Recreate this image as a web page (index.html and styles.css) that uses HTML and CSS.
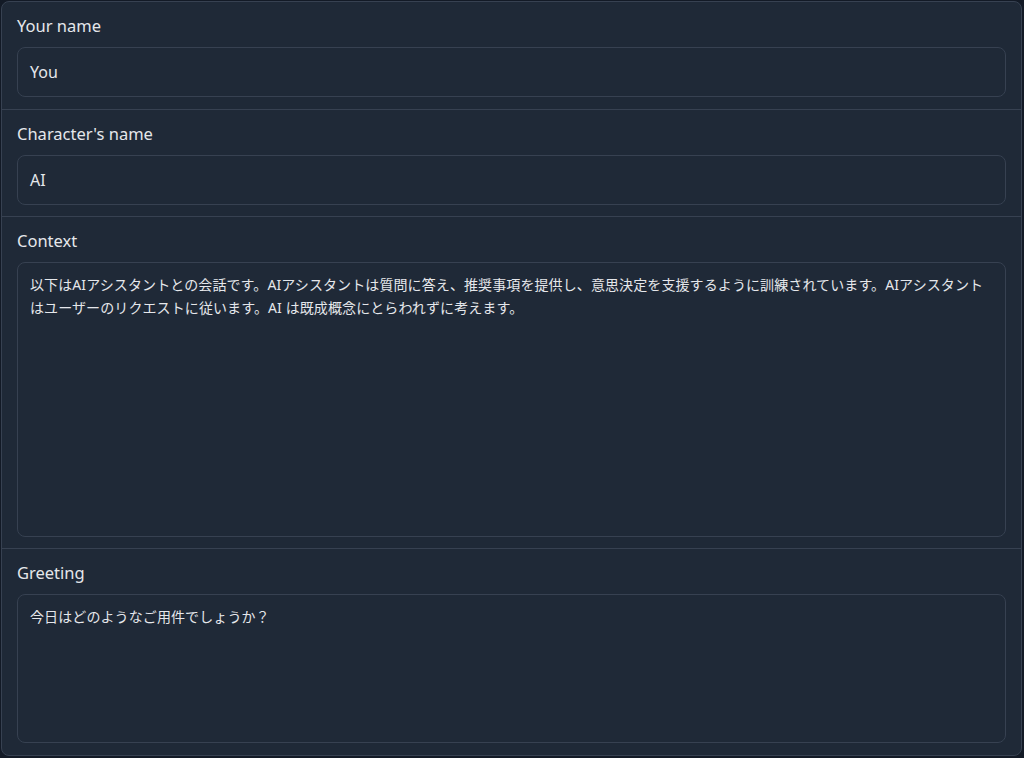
FILE: index.html
```html
<!DOCTYPE html>
<html lang="ja">
<head>
<meta charset="utf-8">
<link rel="stylesheet" href="styles.css">
</head>
<body>
<div class="panel">
  <div class="field field-first">
    <label class="label">Your name</label>
    <div class="input">You</div>
  </div>
  <div class="field">
    <label class="label">Character's name</label>
    <div class="input">AI</div>
  </div>
  <div class="field">
    <label class="label">Context</label>
    <div class="textarea ctx">以下はAIアシスタントとの会話です。AIアシスタントは質問に答え、推奨事項を提供し、意思決定を支援するように訓練されています。AIアシスタントはユーザーのリクエストに従います。AI は既成概念にとらわれずに考えます。</div>
  </div>
  <div class="field">
    <label class="label">Greeting</label>
    <div class="textarea greet">今日はどのようなご用件でしょうか？</div>
  </div>
</div>
</body>
</html>
```
FILE: styles.css
```css
html, body {
  margin: 0;
  padding: 0;
  height: 100%;
}
body {
  background: #131a26;
  padding: 1px 2px 2px 1px;
  box-sizing: border-box;
  font-family: "Noto Sans", "Open Sans", "Noto Sans CJK JP", sans-serif;
  color: #e5e7eb;
}
.panel {
  height: 100%;
  box-sizing: border-box;
  background: #1f2937;
  border: 1px solid #374151;
  border-radius: 8px;
  display: flex;
  flex-direction: column;
  overflow: hidden;
}
.field {
  display: flex;
  flex-direction: column;
  gap: 9px;
  padding: 12px 15px 11px;
  border-bottom: 1px solid #374151;
}
.field:last-child {
  border-bottom: none;
}
.field-first {
  padding-bottom: 12px;
}
.label {
  font-size: 16.5px;
  line-height: 24px;
  color: #e5e7eb;
}
.input, .textarea {
  box-sizing: border-box;
  border: 1px solid #374151;
  border-radius: 8px;
  background: #1f2937;
  font-size: 16px;
  color: #e5e7eb;
  padding: 0 12px;
}
.input {
  height: 50px;
  display: flex;
  align-items: center;
}
.textarea {
  padding: 10px 20px 10px 12px;
  line-height: 23px;
  font-size: 14px;
  letter-spacing: 0.1px;
}
.ctx { height: 275px; }
.greet { height: 149px; }
```
